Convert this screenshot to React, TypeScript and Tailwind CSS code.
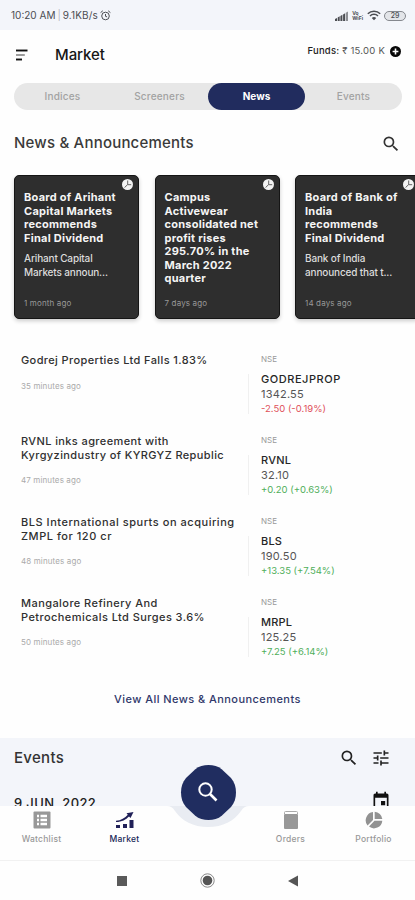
import type { ReactNode } from 'react'
import { MdEvent, MdSearch, MdTune } from 'react-icons/md'

interface NewsCard {
  title: string
  summary?: string
  time: string
}

interface NewsItem {
  lines: string[]
  tracking: string
  time: string
  symbol: string
  price: string
  change: string
  up: boolean
}

const tabs = ['Indices', 'Screeners', 'News', 'Events']

const cards: NewsCard[] = [
  {
    title: 'Board of Arihant\nCapital Markets\nrecommends\nFinal Dividend',
    summary: 'Arihant Capital\nMarkets announ...',
    time: '1 month ago',
  },
  {
    title: 'Campus\nActivewear\nconsolidated net\nprofit rises\n295.70% in the\nMarch 2022\nquarter',
    time: '7 days ago',
  },
  {
    title: 'Board of Bank of\nIndia\nrecommends\nFinal Dividend',
    summary: 'Bank of India\nannounced that t...',
    time: '14 days ago',
  },
]

const news: NewsItem[] = [
  {
    lines: ['Godrej Properties Ltd Falls 1.83%'],
    tracking: 'tracking-[0.39px]',
    time: '35 minutes ago',
    symbol: 'GODREJPROP',
    price: '1342.55',
    change: '-2.50 (-0.19%)',
    up: false,
  },
  {
    lines: ['RVNL inks agreement with', 'Kyrgyzindustry of KYRGYZ Republic'],
    tracking: 'tracking-[0.39px]',
    time: '47 minutes ago',
    symbol: 'RVNL',
    price: '32.10',
    change: '+0.20 (+0.63%)',
    up: true,
  },
  {
    lines: ['BLS International spurts on acquiring', 'ZMPL for 120 cr'],
    tracking: 'tracking-[0.53px]',
    time: '48 minutes ago',
    symbol: 'BLS',
    price: '190.50',
    change: '+13.35 (+7.54%)',
    up: true,
  },
  {
    lines: ['Mangalore Refinery And', 'Petrochemicals Ltd Surges 3.6%'],
    tracking: 'tracking-[0.43px]',
    time: '50 minutes ago',
    symbol: 'MRPL',
    price: '125.25',
    change: '+7.25 (+6.14%)',
    up: true,
  },
]

function StatusBar() {
  return (
    <div className="flex h-[30px] shrink-0 items-center justify-between bg-[#f3f5fa] pl-[11px] pr-[9px] pt-px text-[#4b4d52]">
      <div className="flex items-center text-[10px]">
        <span>10:20 AM</span>
        <span className="mx-[2px] text-[#b5b8be]">|</span>
        <span className="tracking-[0.15px]">9.1KB/s</span>
        <svg className="ml-[2px] h-[11px] w-[11px]" viewBox="0 0 11 11" fill="none" stroke="currentColor">
          <circle cx="5.5" cy="6" r="3.8" />
          <path d="M5.5 4v2.3l1.6.6M.6 2.6 2.8.8M10.4 2.6 8.2.8" />
        </svg>
      </div>
      <div className="flex items-center">
        <svg className="h-[10px] w-[13px]" viewBox="0 0 13 10" fill="currentColor">
          <path d="M0 10V8l2-1v3zM2.7 10V6.5l2-1.2V10zM5.4 10V5l2-1.2V10zM8.1 10V3.4l2-1.2V10z" />
          <path d="M10.8 10V1.8L13 .5V10z" opacity=".6" />
        </svg>
        <span className="ml-1 flex flex-col text-[5px] font-bold leading-[5px]">
          <span>Vo</span>
          <span>WiFi</span>
        </span>
        <svg className="ml-1 h-[11px] w-[14px]" viewBox="0 0 14 11" fill="none" stroke="currentColor" strokeWidth="1.5">
          <path d="M.8 3.7a8.8 8.8 0 0 1 12.4 0M3 6a5.6 5.6 0 0 1 8 0" />
          <path d="M4.8 8a3.2 3.2 0 0 1 4.4 0L7 10.2z" fill="currentColor" stroke="none" />
        </svg>
        <span className="ml-[3px] flex h-[10px] w-[22px] items-center justify-center rounded-full border border-[#85888e] bg-[#e3e5e9] text-[7px] font-medium leading-none">
          29
        </span>
      </div>
    </div>
  )
}

function Header() {
  return (
    <header className="flex h-[53px] shrink-0 items-center pl-4 pr-[14px]">
      <svg className="mt-[-3px] h-3 w-3" viewBox="0 0 12 12">
        <path d="M0 1.5h11.5" stroke="#111" strokeWidth="1.9" />
        <path d="M0 6h8.8" stroke="#8b8b8b" strokeWidth="1.7" />
        <path d="M0 10.5h6" stroke="#111" strokeWidth="1.9" />
      </svg>
      <h1 className="ml-[27px] mt-[-3px] text-[15px] font-medium tracking-[-0.05px] text-[#161616]">Market</h1>
      <div className="ml-auto mt-[-11px] flex items-center">
        <span className="text-[9.5px] tracking-[0.22px]">
          <span className="font-medium text-[#222]">Funds:</span> <span className="text-[#555]">₹ 15.00 K</span>
        </span>
        <svg className="ml-[5px] h-[11px] w-[11px]" viewBox="0 0 11 11">
          <circle cx="5.5" cy="5.5" r="5.5" fill="#080808" />
          <path d="M5.5 2.6v5.8M2.6 5.5h5.8" stroke="#fff" strokeWidth="1.6" />
        </svg>
      </div>
    </header>
  )
}

function Tabs() {
  return (
    <div className="ml-[14px] mr-[13px] flex h-[27px] shrink-0 rounded-full bg-[#e7e7e7]">
      {tabs.map((tab) => (
        <button
          key={tab}
          className={
            tab === 'News'
              ? 'flex-1 rounded-full bg-[#212c5e] pb-px text-[10px] font-bold text-white'
              : 'flex-1 pb-px text-[10px] font-medium tracking-[0.2px] text-[#a2a2a2]'
          }
        >
          {tab}
        </button>
      ))}
    </div>
  )
}

function Card({ title, summary, time }: NewsCard) {
  return (
    <article className="relative flex h-[144px] w-[125px] shrink-0 flex-col rounded-[5px] border border-[#151515] bg-[#2e2e2e] px-[9px] pb-[9px] pt-[15px] shadow-[0_2px_4px_rgba(0,0,0,0.2)]">
      <svg className="absolute right-[5px] top-[3px] h-[11px] w-[11px]" viewBox="0 0 11 11">
        <circle cx="5.5" cy="5.5" r="5.5" fill="#f3f3f3" />
        <path d="M5.7 1.5v4L2.5 8.6M5.7 5.7h3.5" fill="none" stroke="#555" strokeWidth=".9" />
      </svg>
      <h3 className="whitespace-pre text-[11px] font-bold leading-[13.5px] tracking-[0.25px] text-[#f5f5f5]">{title}</h3>
      {summary && (
        <p className="mt-[7px] whitespace-pre text-[10px] font-medium leading-[13.5px] tracking-[-0.15px] text-[#dcdcdc]">
          {summary}
        </p>
      )}
      <span className="mt-auto text-[8px] leading-[12px] tracking-[0.15px] text-[#999]">{time}</span>
    </article>
  )
}

function NewsRow({ item }: { item: NewsItem }) {
  return (
    <div className="flex h-[81px] pl-[21px]">
      <div className="w-[227px] pt-[2px]">
        {item.lines.map((line) => (
          <p key={line} className={`whitespace-nowrap text-[11px] font-medium leading-[13.5px] text-[#303030] ${item.tracking}`}>
            {line}
          </p>
        ))}
        <p className="mt-[12px] text-[8px] leading-[13px] tracking-[0.12px] text-[#aaa]">{item.time}</p>
      </div>
      <div className="mt-[22px] h-10 w-px bg-[#f0f0f0]" />
      <div className="ml-3 flex flex-col whitespace-nowrap">
        <span className="text-[8px] leading-[14px] text-[#999]">NSE</span>
        <span
          className={
            item.symbol === 'GODREJPROP'
              ? 'mt-[6px] text-[11px] font-medium leading-[15px] tracking-[0.55px] text-[#262626]'
              : 'mt-[6px] text-[11px] font-medium leading-[15px] tracking-[0.2px] text-[#262626]'
          }
        >
          {item.symbol}
        </span>
        <span className="text-[11px] leading-[15px] tracking-[0.2px] text-[#555]">{item.price}</span>
        <span className={item.up ? 'text-[9.5px] leading-[14px] text-[#4fae5a]' : 'text-[9.5px] leading-[14px] text-[#e0505a]'}>
          {item.change}
        </span>
      </div>
    </div>
  )
}

function NavItem({ label, active, children }: { label: string; active?: boolean; children: ReactNode }) {
  return (
    <button
      className={
        active
          ? 'flex w-[83px] flex-col items-center pt-[5px] text-[#202858]'
          : 'flex w-[83px] flex-col items-center pt-[5px] text-[#989898]'
      }
    >
      {children}
      <span className="mt-[4px] text-[8.5px] font-medium leading-[12px] tracking-[0.25px]">{label}</span>
    </button>
  )
}

function BottomNav() {
  return (
    <nav className="relative flex h-[55px] shrink-0 border-b border-[#f1f1f1] bg-[#fefefe]">
      {/* Notch under the search button */}
      <svg className="absolute left-[166px] top-[-44px] h-[68px] w-[84px]" viewBox="0 0 84 68">
        <path d="M1 44q5 0 8 5c7 10 18 16 33 16s26-6 33-16q3-5 8-5z" fill="#e9ecf2" />
        <path
          d="M42.5 3c5 0 9.500 1 13.500 4.500L65 16c3.500 4 5 9 5 14.500S68.500 41 65 45l-9 8.500c-4 3.500-8.500 4.500-13.500 4.500s-9.500-1-13.500-4.500L20 45c-3.500-4-5-9-5-14.500S16.500 20 20 16l9-8.500C33 4 37.500 3 42.500 3z"
          fill="#202d60"
        />
        <circle cx="39.500" cy="27.500" r="6.200" fill="none" stroke="#fff" strokeWidth="2" />
        <path d="m44 32 6.500 6.500" stroke="#fff" strokeWidth="2.600" />
      </svg>
      <NavItem label="Watchlist">
        <svg className="h-[18px] w-[18px]" viewBox="0 0 18 18">
          <rect x=".5" y=".5" width="17" height="17" rx="1" fill="#989898" />
          <path d="M4 5h2M4 9h2M4 13h2M7.500 5H14M7.500 9H14M7.500 13H14" stroke="#fff" strokeWidth="2.600" />
        </svg>
      </NavItem>
      <NavItem label="Market" active>
        <svg className="h-[18px] w-[18px]" viewBox="0 0 18 18" fill="#202058">
          <path d="M0 14h4v3H0zM7 13h4v4H7zM13.500 9H17.500v8h-4z" />
          <path d="M0 11c6 0 10-2.500 13-5.500l1.500 1.500L17.500 1l-7 1.300 1.300 1.500C9 7 5 9.500 0 9.800z" />
        </svg>
      </NavItem>
      <div className="w-[83px]" />
      <NavItem label="Orders">
        <svg className="h-[18px] w-[18px]" viewBox="0 0 18 18">
          <path d="M2.500 3V1.500q0-1 1-1h11q1 0 1 1V3" fill="none" stroke="#aaa" />
          <rect x="2" y="3" width="14" height="15" rx="1" fill="#989898" />
        </svg>
      </NavItem>
      <NavItem label="Portfolio">
        <svg className="h-[18px] w-[18px]" viewBox="0 0 18 18" fill="#929292">
          <path d="M8 1v8l-5.500 5.500A8.400 8.400 0 0 1 8 1z" />
          <path d="M9.700.700a8.300 8.300 0 0 1 7.600 7.300H9.700z" />
          <path d="M9.500 9.700h7.800A8.300 8.300 0 0 1 4 15.600z" />
        </svg>
      </NavItem>
    </nav>
  )
}

function SystemBar() {
  return (
    <div className="flex h-[39px] shrink-0 items-center justify-between bg-[#fefefe] pl-[117px] pr-[117px]">
      <span className="h-[10px] w-[10px] bg-[#5a5a5a]" />
      <svg className="h-[15px] w-[15px]" viewBox="0 0 15 15">
        <circle cx="7.500" cy="7.500" r="6.700" fill="none" stroke="#888" />
        <circle cx="7.500" cy="7.500" r="4.800" fill="#555" />
      </svg>
      <svg className="h-[12px] w-[10px]" viewBox="0 0 10 12">
        <path d="M0 6 10 .5v11z" fill="#555" />
      </svg>
    </div>
  )
}

export default function App() {
  return (
    <div className="flex h-[900px] w-[415px] flex-col overflow-hidden bg-[#fefefe] font-['Inter',sans-serif]">
      <StatusBar />
      <Header />
      <Tabs />

      <div className="flex h-[65px] shrink-0 items-center justify-between pl-[14px] pr-[14px] pt-[2px]">
        <h2 className="text-[15px] font-medium tracking-[0.2px] text-[#3a3a3a]">News &amp; Announcements</h2>
        <MdSearch className="h-5 w-5 text-[#333]" />
      </div>
      <div className="flex h-[177px] shrink-0 gap-[15.5px] overflow-hidden pl-[14px]">
        {cards.map((card) => (
          <Card key={card.title} {...card} />
        ))}
      </div>

      <div className="h-[325px] shrink-0">
        {news.map((item) => (
          <NewsRow key={item.symbol} item={item} />
        ))}
      </div>
      <button className="h-[61px] shrink-0 pb-[17px] text-[11px] font-medium tracking-[0.44px] text-[#30386a]">
        View All News &amp; Announcements
      </button>

      <section className="flex h-[68px] shrink-0 flex-col overflow-hidden bg-[#f3f5fa]">
        <div className="flex h-10 shrink-0 items-center pl-[14px] pr-[24px]">
          <h2 className="text-[15px] font-medium tracking-[0.3px] text-[#333]">Events</h2>
          <MdSearch className="ml-auto h-5 w-5 text-[#222]" />
          <MdTune className="ml-3 h-5 w-5 text-[#222]" />
        </div>
        <div className="flex shrink-0 items-start justify-between pl-[14px] pr-[24px] pt-[13px]">
          <span className="pt-[3px] text-[13px] font-medium leading-[18px] tracking-[0.35px] text-[#222]">9 JUN, 2022</span>
          <MdEvent className="h-5 w-5 text-[#111]" />
        </div>
      </section>
      <BottomNav />
      <SystemBar />
    </div>
  )
}
